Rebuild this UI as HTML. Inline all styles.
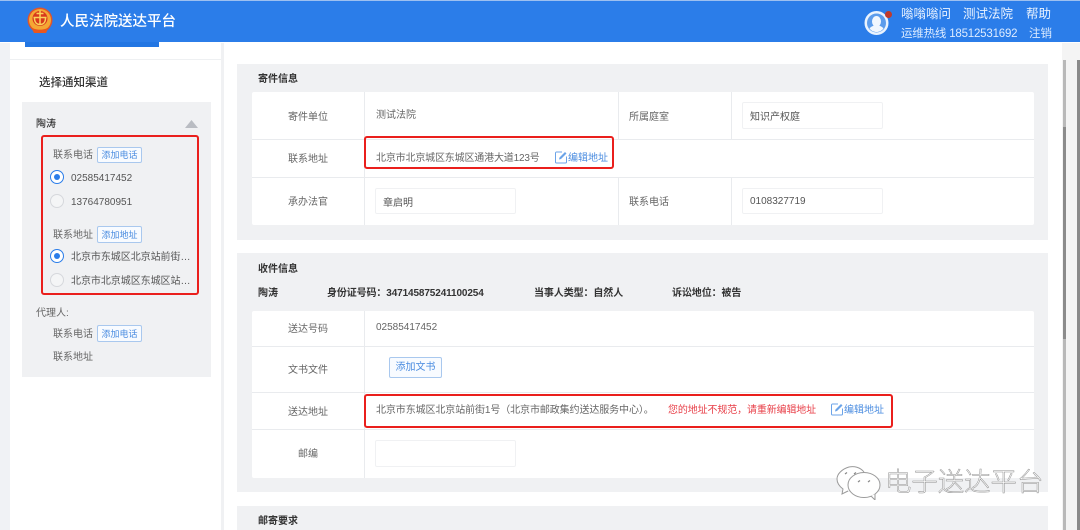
<!DOCTYPE html>
<html lang="zh-CN"><head><meta charset="utf-8"><title>人民法院送达平台</title>
<style>
html,body{margin:0;padding:0;background:#fff}
#p{position:relative;width:1080px;height:530px;overflow:hidden;background:#fff;font-family:"Liberation Sans","Noto Sans CJK SC",sans-serif;color:#666;font-size:10px;filter:blur(.35px)}
#p div,#p span.a,#p svg{position:absolute}
.t{white-space:nowrap;line-height:14px}
.d{color:#555}
.l{color:#666}
.b{font-weight:700;color:#333}
.g{background:#f0f1f3}
.w{background:#fff}
.h{height:1px;background:#e9ebee}
.v{width:1px;background:#e9ebee}
.inp{background:#fff;border:1px solid #f0f1f3;border-radius:2px;box-sizing:border-box}
.btn{border:1px solid #a9c8ee;border-radius:2px;background:#f8fbff;color:#4a8ce0;box-sizing:border-box;text-align:center;font-size:9px;white-space:nowrap}
.red{border:2px solid #ea1f1c;border-radius:3px;box-sizing:border-box}
.link{color:#4a8ce0}
.r{width:14px;height:14px;border-radius:50%;box-sizing:border-box;background:#fff}
.on{border:1px solid #2b7de9}
.on i{position:absolute;left:3px;top:3px;width:6px;height:6px;border-radius:50%;background:#2b7de9}
.off{border:1px solid #d6d8dc;background:#f4f5f6}
</style></head><body><div id="p">

<div style="left:0;top:43px;width:1080px;height:487px;background:#fff"></div>
<div style="left:0;top:0;width:1080px;height:1px;background:#9dc0f0"></div>
<div style="left:0;top:1px;width:1080px;height:41px;background:#2b7de9"></div>
<div style="left:25px;top:42px;width:134px;height:5px;background:#2276e3"></div>

<svg style="left:27px;top:7px" width="26" height="27" viewBox="0 0 26 27">
<circle cx="13" cy="13" r="12.500" fill="#e0552a"/>
<circle cx="13" cy="13" r="11" fill="#f5a733"/>
<circle cx="13" cy="11.500" r="7.500" fill="#d8391c"/>
<path d="M13 3.500v14M9.500 6.500h7M6.500 10.500h13M7.500 11c0 4 2 6.500 5.500 6.500s5.500-2.500 5.500-6.500" stroke="#fbd25a" stroke-width="1.500" fill="none"/>
<path d="M4 20c4 3.500 14 3.500 18 0l-3 6H7z" fill="#e8571f"/>
</svg>
<div class="t" style="left:60px;top:12px;font-size:14.500px;line-height:20px;color:#fff;font-weight:500">人民法院送达平台</div>

<svg style="left:864px;top:10px" width="26" height="26" viewBox="0 0 26 26">
<circle cx="12.500" cy="13" r="12" fill="#eaf3fe"/>
<circle cx="12.500" cy="13" r="9.500" fill="#5c9cec"/>
<ellipse cx="12.500" cy="11.500" rx="4.500" ry="5.500" fill="#f2f7fe"/>
<path d="M5.500 18.500c2-2.500 4-3 7-3s5 .5 7 3c-2 2.500-4.500 3.500-7 3.500s-5-1-7-3.500z" fill="#f2f7fe"/>
</svg>
<div style="left:885px;top:11px;width:7px;height:7px;border-radius:50%;background:#c0392b"></div>
<div class="t" style="left:901px;top:5px;font-size:12.500px;line-height:18px;color:#eaf3ff">嗡嗡嗡问</div>
<div class="t" style="left:963px;top:5px;font-size:12.500px;line-height:18px;color:#eaf3ff">测试法院</div>
<div class="t" style="left:1026px;top:5px;font-size:12.500px;line-height:18px;color:#eaf3ff">帮助</div>
<div class="t" style="left:901px;top:26px;font-size:11.500px;line-height:16px;color:#dcebff;letter-spacing:-.2px">运维热线 18512531692</div>
<div class="t" style="left:1029px;top:26px;font-size:11.500px;line-height:16px;color:#dcebff">注销</div>

<div style="left:0;top:43px;width:10px;height:487px;background:#f0f2f5"></div>
<div style="left:10px;top:59px;width:211px;height:1px;background:#eef0f2"></div>
<div style="left:221px;top:43px;width:3px;height:487px;background:#f0f1f3"></div>
<div style="left:1062px;top:43px;width:18px;height:487px;background:#f4f4f4"></div>
<div style="left:1063px;top:60px;width:3px;height:470px;background:#b9b9b9"></div>
<div style="left:1063px;top:127px;width:3px;height:212px;background:#8b8b8b"></div>
<div style="left:1077px;top:60px;width:3px;height:470px;background:#8a8a8a"></div>

<div class="t" style="left:39px;top:75px;font-size:11.500px;line-height:16px;color:#333;font-weight:500">选择通知渠道</div>
<div class="g" style="left:22px;top:102px;width:189px;height:275px"></div>
<div class="t" style="left:36px;top:118px;font-size:10px;color:#333;font-weight:500">陶涛</div>
<svg style="left:185px;top:120px" width="13" height="8" viewBox="0 0 13 8"><path d="M6.500 0L13 8H0z" fill="#b9bcc2"/></svg>

<div class="red" style="left:41px;top:135px;width:158px;height:160px"></div>
<div class="t l" style="left:53px;top:149px">联系电话</div>
<div class="btn" style="left:97px;top:147px;width:45px;height:16px;line-height:15px">添加电话</div>
<div class="r on" style="left:50px;top:170px"><i></i></div>
<div class="t d" style="left:71px;top:172px;font-size:10px">02585417452</div>
<div class="r off" style="left:50px;top:194px"></div>
<div class="t d" style="left:71px;top:196px;font-size:10px">13764780951</div>
<div class="t l" style="left:53px;top:229px">联系地址</div>
<div class="btn" style="left:97px;top:226px;width:45px;height:17px;line-height:16px">添加地址</div>
<div class="r on" style="left:50px;top:249px"><i></i></div>
<div class="t d" style="left:71px;top:251px;letter-spacing:-.05px">北京市东城区北京站前街…</div>
<div class="r off" style="left:50px;top:273px"></div>
<div class="t d" style="left:71px;top:275px;letter-spacing:-.05px">北京市北京城区东城区站…</div>
<div class="t l" style="left:36px;top:307px">代理人:</div>
<div class="t l" style="left:53px;top:328px">联系电话</div>
<div class="btn" style="left:97px;top:325px;width:45px;height:17px;line-height:16px">添加电话</div>
<div class="t l" style="left:53px;top:351px">联系地址</div>

<div class="g" style="left:237px;top:64px;width:811px;height:176px"></div>
<div class="t b" style="left:258px;top:73px">寄件信息</div>
<div class="w" style="left:252px;top:92px;width:782px;height:133px;border-radius:2px"></div>
<div class="h" style="left:252px;top:139px;width:782px"></div>
<div class="h" style="left:252px;top:177px;width:782px"></div>
<div class="v" style="left:364px;top:92px;height:133px"></div>
<div class="v" style="left:618px;top:92px;height:47px"></div>
<div class="v" style="left:731px;top:92px;height:47px"></div>
<div class="v" style="left:618px;top:177px;height:48px"></div>
<div class="v" style="left:731px;top:177px;height:48px"></div>

<div class="t l" style="left:288px;top:111px">寄件单位</div>
<div class="t l" style="left:376px;top:109px">测试法院</div>
<div class="t l" style="left:629px;top:111px">所属庭室</div>
<div class="inp" style="left:742px;top:102px;width:141px;height:27px"></div>
<div class="t d" style="left:750px;top:111px">知识产权庭</div>
<div class="t l" style="left:288px;top:153px">联系地址</div>
<div class="t l" style="left:376px;top:152px;letter-spacing:-.17px">北京市北京城区东城区通港大道123号</div>
<svg style="left:554px;top:150px" width="14" height="14" viewBox="0 0 14 14"><path d="M8 2H2.500a1 1 0 0 0-1 1v9a1 1 0 0 0 1 1h9a1 1 0 0 0 1-1V6.500" fill="none" stroke="#6ba3e8"/><path d="M5 9.500l.5-2L11 2l1.500 1.500L7 9z" fill="#6ba3e8"/></svg>
<div class="t link" style="left:568px;top:152px">编辑地址</div>
<div class="red" style="left:364px;top:136px;width:250px;height:33px"></div>
<div class="t l" style="left:288px;top:196px">承办法官</div>
<div class="inp" style="left:375px;top:188px;width:141px;height:26px"></div>
<div class="t d" style="left:383px;top:197px">章启明</div>
<div class="t l" style="left:629px;top:196px">联系电话</div>
<div class="inp" style="left:742px;top:188px;width:141px;height:26px"></div>
<div class="t d" style="left:750px;top:195px">0108327719</div>

<div class="g" style="left:237px;top:253px;width:811px;height:239px"></div>
<div class="t b" style="left:258px;top:263px">收件信息</div>
<div class="t b" style="left:258px;top:287px">陶涛</div>
<div class="t b" style="left:327px;top:287px;letter-spacing:-.12px">身份证号码：347145875241100254</div>
<div class="t b" style="left:534px;top:287px;letter-spacing:-.1px">当事人类型：自然人</div>
<div class="t b" style="left:672px;top:287px;letter-spacing:-.1px">诉讼地位：被告</div>
<div class="w" style="left:252px;top:311px;width:782px;height:167px;border-radius:2px"></div>
<div class="h" style="left:252px;top:346px;width:782px"></div>
<div class="h" style="left:252px;top:392px;width:782px"></div>
<div class="h" style="left:252px;top:429px;width:782px"></div>
<div class="v" style="left:364px;top:311px;height:167px"></div>

<div class="t l" style="left:288px;top:323px">送达号码</div>
<div class="t l" style="left:376px;top:321px">02585417452</div>
<div class="t l" style="left:288px;top:364px">文书文件</div>
<div class="btn" style="left:389px;top:357px;width:53px;height:21px;line-height:20px;font-size:10px">添加文书</div>
<div class="t l" style="left:288px;top:406px">送达地址</div>
<div class="t l" style="left:376px;top:404px;letter-spacing:-.1px">北京市东城区北京站前街1号（北京市邮政集约送达服务中心）。</div>
<div class="t" style="left:668px;top:404px;color:#e8414a;letter-spacing:-.13px">您的地址不规范，请重新编辑地址</div>
<svg style="left:830px;top:402px" width="14" height="14" viewBox="0 0 14 14"><path d="M8 2H2.500a1 1 0 0 0-1 1v9a1 1 0 0 0 1 1h9a1 1 0 0 0 1-1V6.500" fill="none" stroke="#6ba3e8"/><path d="M5 9.500l.5-2L11 2l1.500 1.500L7 9z" fill="#6ba3e8"/></svg>
<div class="t link" style="left:844px;top:404px">编辑地址</div>
<div class="red" style="left:364px;top:394px;width:529px;height:34px"></div>
<div class="t l" style="left:298px;top:448px">邮编</div>
<div class="inp" style="left:375px;top:440px;width:141px;height:27px"></div>

<div class="g" style="left:237px;top:506px;width:811px;height:24px"></div>
<div class="t b" style="left:258px;top:515px">邮寄要求</div>

<svg style="left:834px;top:464px" width="50" height="36" viewBox="0 0 50 36">
<path d="M30 8C26 3 20 2 15 3 8 5 3 10 3 15c0 4 2 7 6 10l-1 5 6-3" fill="#fff" fill-opacity=".9" stroke="#9a9a9a" stroke-width="1"/>
<ellipse cx="30" cy="21" rx="16" ry="12.500" fill="#fff" fill-opacity=".9" stroke="#9a9a9a" stroke-width="1"/>
<path d="M37 32l4 4v-6" fill="#fff" stroke="#9a9a9a"/>
<path d="M11 10l2-1.500M20 10l2-1.500M24 18l2-1.500M34 18l2-1.500" stroke="#888" stroke-width="1.200"/>
</svg>
<div class="t" style="left:885px;top:465px;font-size:26.400px;line-height:34px;color:#fff;-webkit-text-stroke:.5px #8f8f8f;font-weight:300">电子送达平台</div>

</div></body></html>
